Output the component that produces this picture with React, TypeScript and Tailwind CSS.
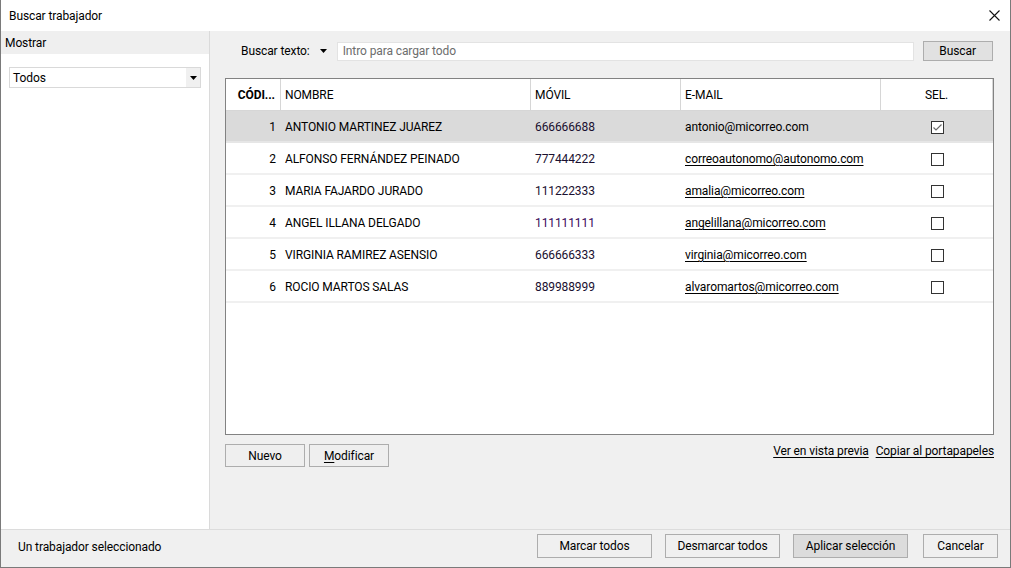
import React from "react";

type Row = { id: number; name: string; phone: string; email: string; sel: boolean; purple?: boolean };

const rows: Row[] = [
  { id: 1, name: "ANTONIO MARTINEZ JUAREZ", phone: "666666688", email: "antonio@micorreo.com", sel: true },
  { id: 2, name: "ALFONSO FERNÁNDEZ PEINADO", phone: "777444222", email: "correoautonomo@autonomo.com", sel: false },
  { id: 3, name: "MARIA FAJARDO JURADO", phone: "111222333", email: "amalia@micorreo.com", sel: false },
  { id: 4, name: "ANGEL ILLANA DELGADO", phone: "111111111", email: "angelillana@micorreo.com", sel: false, purple: true },
  { id: 5, name: "VIRGINIA RAMIREZ ASENSIO", phone: "666666333", email: "virginia@micorreo.com", sel: false },
  { id: 6, name: "ROCIO MARTOS SALAS", phone: "889988999", email: "alvaromartos@micorreo.com", sel: false },
];

function Caret() {
  return (
    <svg width="7" height="4" viewBox="0 0 7 4" className="block">
      <path d="M0 0 H7 L3.5 4 Z" fill="#000" />
    </svg>
  );
}

function Checkbox({ checked }: { checked: boolean }) {
  return (
    <div className="w-[13px] h-[13px] border border-[#333333] bg-white flex items-center justify-center">
      {checked && (
        <svg width="11" height="11" viewBox="0 0 11 11">
          <path d="M1.5 5.5 L4 8 L9.5 2.5" fill="none" stroke="#6b6b6b" strokeWidth="1.2" />
        </svg>
      )}
    </div>
  );
}

export default function App() {
  return (
    <div
      className="w-[1011px] h-[568px] flex flex-col bg-white border-l border-r border-b border-[#7a7a7a] text-[12px] text-black tracking-[-0.1px] overflow-hidden"
      style={{ fontFamily: 'Roboto, "Noto Sans", sans-serif' }}
    >
      {/* Title bar */}
      <div className="h-[31px] shrink-0 flex items-center justify-between pl-[8px] pr-[10px] bg-white">
        <span className="text-[12px]">Buscar trabajador</span>
        <svg width="11" height="11" viewBox="0 0 11 11" className="mt-[-1px]">
          <path d="M0.5 0.5 L10.5 10.5 M10.5 0.5 L0.5 10.5" stroke="#111" strokeWidth="1.1" />
        </svg>
      </div>

      {/* Main */}
      <div className="h-[498px] shrink-0 flex">
        {/* Left panel */}
        <div className="w-[209px] shrink-0 bg-white border-r border-[#dadada] flex flex-col">
          <div className="h-[23px] bg-[#efefef] flex items-center pl-[4px]">Mostrar</div>
          <div className="pt-[13px] pl-[8px]">
            <div className="w-[192px] h-[21px] border border-[#d9d9d9] bg-white flex items-center">
              <span className="flex-1 pl-[3px]">Todos</span>
              <div className="w-[14px] h-full bg-[#f0f0f0] flex items-center justify-center">
                <Caret />
              </div>
            </div>
          </div>
        </div>

        {/* Right panel */}
        <div className="flex-1 bg-[#f0f0f0] flex flex-col pl-[15px] pr-[16px]">
          {/* Search row */}
          <div className="mt-[10px] h-[20px] flex items-center">
            <span className="ml-[16px]">Buscar texto:</span>
            <div className="ml-[9px] w-[10px] flex justify-center">
              <Caret />
            </div>
            <div className="ml-[8px] w-[577px] h-[19px] border border-[#e3e3e3] bg-white flex items-center pl-[5px] text-[#6d6d6d]">
              Intro para cargar todo
            </div>
            <div className="ml-[9px] w-[70px] h-[20px] border border-[#adadad] bg-[#e1e1e1] flex items-center justify-center">
              Buscar
            </div>
          </div>

          {/* Grid */}
          <div className="mt-[17px] h-[357px] border border-[#828282] bg-white flex flex-col">
            <div className="h-[32px] flex border-b border-[#d6d6d6]">
              <div className="w-[55px] border-r border-[#d6d6d6] flex items-center justify-end pr-[5px] font-bold">CÓDI...</div>
              <div className="w-[250px] border-r border-[#d6d6d6] flex items-center pl-[4px]">NOMBRE</div>
              <div className="w-[150px] border-r border-[#d6d6d6] flex items-center pl-[4px]">MÓVIL</div>
              <div className="w-[200px] border-r border-[#d6d6d6] flex items-center pl-[4px]">E-MAIL</div>
              <div className="w-[112px] border-r border-[#d6d6d6] flex items-center justify-center">SEL.</div>
            </div>
            {rows.map((r) => (
              <div
                key={r.id}
                className={`h-[32px] pt-[2px] flex border-b-2 ${r.sel ? "bg-[#dadada] border-[#e6e6e6]" : "bg-white border-[#f0f0f0]"}`}
              >
                <div className="w-[55px] flex items-center justify-end pr-[5px]">{r.id}</div>
                <div className="w-[250px] flex items-center pl-[4px]">{r.name}</div>
                <div className={`w-[150px] flex items-center pl-[4px] ${r.purple ? "text-[#3a0a5a]" : "text-[#1a1030]"}`}>{r.phone}</div>
                <div className={`w-[200px] flex items-center pl-[4px] ${r.sel ? "" : "underline underline-offset-2"}`}>{r.email}</div>
                <div className="w-[112px] flex items-center justify-center">
                  <Checkbox checked={r.sel} />
                </div>
              </div>
            ))}
          </div>

          {/* Buttons + links */}
          <div className="mt-[9px] flex items-start">
            <div className="w-[80px] h-[23px] border border-[#adadad] bg-[#efefef] flex items-center justify-center">Nuevo</div>
            <div className="ml-[4px] w-[80px] h-[23px] border border-[#adadad] bg-[#efefef] flex items-center justify-center">
              <span><span className="underline underline-offset-2">M</span>odificar</span>
            </div>
            <div className="flex-1" />
            <div className="mt-[-2px] flex gap-[7px]">
              <span className="underline underline-offset-2">Ver en vista previa</span>
              <span className="underline underline-offset-2">Copiar al portapapeles</span>
            </div>
          </div>
        </div>
      </div>

      {/* Footer */}
      <div className="flex-1 border-t border-[#dcdcdc] bg-[#f0f0f0] flex items-start pt-[4px] pl-[17px] pr-[12px]">
        <span className="flex-1 h-[24px] mt-[1px] flex items-center">Un trabajador seleccionado</span>
        <div className="flex items-center">
          <div className="w-[115px] h-[24px] border border-[#adadad] bg-[#f0f0f0] flex items-center justify-center">Marcar todos</div>
          <div className="ml-[13px] w-[115px] h-[24px] border border-[#adadad] bg-[#f0f0f0] flex items-center justify-center">Desmarcar todos</div>
          <div className="ml-[13px] w-[115px] h-[24px] border border-[#adadad] bg-[#dcdcdc] flex items-center justify-center">Aplicar selección</div>
          <div className="ml-[15px] w-[75px] h-[24px] border border-[#adadad] bg-[#f0f0f0] flex items-center justify-center">Cancelar</div>
        </div>
      </div>
    </div>
  );
}
